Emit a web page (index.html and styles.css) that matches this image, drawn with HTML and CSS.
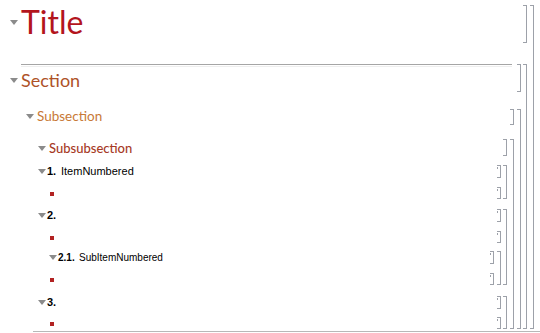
FILE: index.html
```html
<!DOCTYPE html>
<html>
<head>
<meta charset="utf-8">
<link rel="stylesheet" href="styles.css">
</head>
<body>
<div class="nb">
  <div class="grp g-title">
    <div class="cell title"><span class="tri"></span><span class="title-text">Title</span></div>
    <div class="grp g-section">
      <div class="cell section">
        <div class="rule"></div>
        <div class="row"><span class="tri"></span><span class="section-text">Section</span></div>
      </div>
      <div class="grp g-sub">
        <div class="cell subsection"><span class="tri"></span><span class="subsection-text">Subsection</span></div>
        <div class="grp g-subsub">
          <div class="cell subsub"><span class="tri"></span><span class="subsub-text">Subsubsection</span></div>

          <div class="grp g-item g-item1">
            <div class="cell mark item"><span class="tri"></span><span class="num">1.</span><span class="item-text">ItemNumbered</span></div>
            <div class="cell mark bullet b1"><span class="sq"></span></div>
          </div>

          <div class="grp g-item g-item2">
            <div class="cell mark item"><span class="tri"></span><span class="num">2.</span></div>
            <div class="cell mark bullet b2"><span class="sq"></span></div>
            <div class="grp g-subitem">
              <div class="cell mark subitem"><span class="tri"></span><span class="subnum">2.1.</span><span class="subitem-text">SubItemNumbered</span></div>
              <div class="cell mark bullet b3"><span class="sq"></span></div>
            </div>
          </div>

          <div class="grp g-item g-item3">
            <div class="cell mark item"><span class="tri"></span><span class="num">3.</span></div>
            <div class="cell mark bullet b4"><span class="sq"></span></div>
          </div>
        </div>
      </div>
    </div>
  </div>
  <div class="endline"></div>
</div>
</body>
</html>
```

FILE: styles.css
```css
* {
  box-sizing: border-box;
  margin: 0;
  padding: 0;
}

html, body {
  width: 540px;
  height: 333px;
  overflow: hidden;
  background: #ffffff;
}

body {
  font-family: Lato, "Liberation Sans", sans-serif;
}

.nb {
  width: 540px;
  height: 333px;
  padding-top: 5px;
}

/* Cell brackets */
.grp,
.cell {
  border-right: 1px solid #9da1a9;
  background:
    linear-gradient(#9da1a9, #9da1a9) right top / 3px 1px no-repeat,
    linear-gradient(#9da1a9, #9da1a9) right bottom / 3px 1px no-repeat;
}

.cell.mark {
  background:
    linear-gradient(#9da1a9, #9da1a9) right top / 3px 1px no-repeat,
    linear-gradient(#9da1a9, #9da1a9) right 2px top 2px / 1px 2px no-repeat,
    linear-gradient(#9da1a9, #9da1a9) right bottom / 3px 1px no-repeat;
}

.grp {
  padding-right: 5.67px;
}

.g-title {
  margin-right: 6px;
}

/* Disclosure triangles */
.tri {
  flex: none;
  width: 0;
  height: 0;
  border-left: 4px solid transparent;
  border-right: 4px solid transparent;
  border-top: 5px solid #8b8b8b;
}

/* Title */
.cell.title {
  height: 38px;
  display: flex;
  align-items: center;
  padding-left: 10px;
  padding-bottom: 4px;
}

.title-text {
  margin-left: 3px;
  font-size: 32px;
  line-height: 32px;
  color: #b3151d;
}

/* Section */
.g-section {
  margin-top: 21px;
}

.cell.section {
  height: 28px;
}

.rule {
  height: 1px;
  margin-left: 21px;
  margin-right: 8px;
  background: #a5a5a5;
  box-shadow: 0 2px 0 #eeeeee;
}

.cell.section .row {
  display: flex;
  align-items: center;
  padding-left: 10px;
  margin-top: 6px;
}

.section-text {
  margin-left: 3px;
  font-size: 18px;
  line-height: 18px;
  color: #ae5228;
}

/* Subsection */
.g-sub {
  margin-top: 17px;
}

.cell.subsection {
  height: 16px;
  display: flex;
  align-items: center;
  padding-left: 26px;
  padding-bottom: 2px;
}

.subsection-text {
  margin-left: 3px;
  font-size: 13.5px;
  line-height: 13px;
  color: #c87936;
}

/* Subsubsection */
.g-subsub {
  margin-top: 14px;
}

.cell.subsub {
  height: 17px;
  display: flex;
  align-items: center;
  padding-left: 38px;
  padding-top: 1px;
}

.subsub-text {
  margin-left: 3px;
  font-size: 13px;
  line-height: 13px;
  color: #a63925;
  font-weight: 500;
}

/* Items */
.g-item1 {
  margin-top: 9px;
}

.g-item2 {
  margin-top: 10px;
}

.g-item3 {
  margin-top: 11px;
}

.cell.item {
  height: 13px;
  display: flex;
  align-items: center;
  padding-left: 38px;
  font-family: "Liberation Sans", Arial, sans-serif;
  font-size: 11px;
  line-height: 11px;
  color: #000000;
}

.num {
  width: 14px;
  margin-left: 1px;
  font-weight: bold;
}

.item-text {
  font-weight: normal;
}

.cell.bullet {
  height: 12px;
  padding-left: 50px;
  padding-top: 5px;
  margin-top: 9px;
}

.cell.bullet.b4 {
  margin-top: 8px;
}

.sq {
  display: block;
  width: 4px;
  height: 4px;
  background: #b22222;
}

/* Sub items */
.g-subitem {
  margin-top: 8px;
}

.cell.subitem {
  height: 13px;
  display: flex;
  align-items: center;
  padding-left: 49px;
  font-family: "Liberation Sans", Arial, sans-serif;
  font-size: 10px;
  line-height: 10px;
  color: #000000;
}

.subnum {
  width: 21px;
  margin-left: 1px;
  font-weight: bold;
}

/* Bottom line */
.endline {
  height: 1px;
  margin-top: 2px;
  margin-left: 33px;
  background: #b8b8b8;
}
```
